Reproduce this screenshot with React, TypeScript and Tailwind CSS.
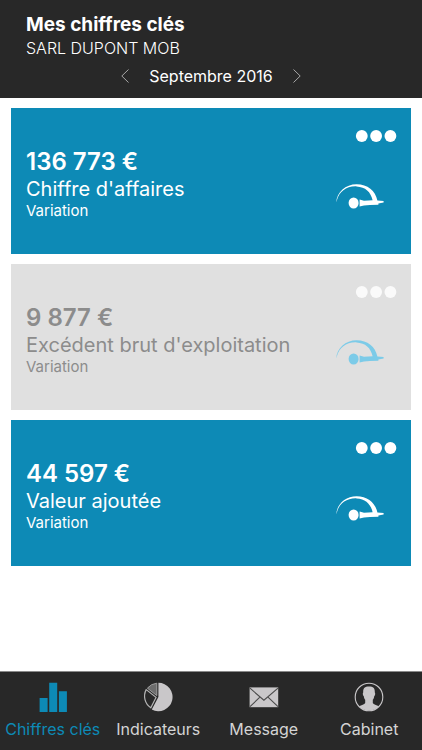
import { clsx } from "clsx";

type KeyFigure = {
  amount: string;
  label: string;
  muted?: boolean;
};

const FIGURES: KeyFigure[] = [
  { amount: "136 773 €", label: "Chiffre d'affaires" },
  { amount: "9 877 €", label: "Excédent brut d'exploitation", muted: true },
  { amount: "44 597 €", label: "Valeur ajoutée" },
];

const TABS = [
  { label: "Chiffres clés", icon: BarsIcon, active: true },
  { label: "Indicateurs", icon: PieIcon },
  { label: "Message", icon: EnvelopeIcon },
  { label: "Cabinet", icon: PersonIcon },
];

function Chevron({ d }: { d: string }) {
  return (
    <svg viewBox="0 0 8 14" className="h-3.5 w-2" fill="none" stroke="currentColor" strokeWidth="0.9">
      <path d={d} />
    </svg>
  );
}

function GaugeIcon({ className }: { className?: string }) {
  return (
    <svg viewBox="0 0 48 26" className={clsx("h-[26px] w-12", className)} fill="currentColor">
      <path d="M0.2 18.6C0.8 8 9.5 0.2 20.6 0.2C31.6 0.2 39.4 6.8 41.4 16.4L47.6 17V18.6L42.4 19.6V20.8L34 21L28 21.4L23.6 22.6V15.6L28 16.8L36.6 16.2C34.8 7.8 29.4 2.9 20.6 2.4C10.4 1.9 3 8.2 1 16Z" />
      <ellipse cx="17.6" cy="19" rx="5" ry="5.6" />
    </svg>
  );
}

function DotsIcon() {
  return (
    <svg viewBox="0 0 42 12" className="h-3 w-[42px]" fill="currentColor">
      <circle cx="6.8" cy="6" r="5.9" />
      <circle cx="21.1" cy="6" r="5.9" />
      <circle cx="35.4" cy="6" r="5.9" />
    </svg>
  );
}

function BarsIcon() {
  return (
    <svg viewBox="0 0 30 30" className="size-[30px]" fill="currentColor">
      <path d="M1.6 16h8v14h-8zM11.2 0.8h8V30h-8zM20.9 9.2h8V30h-8z" />
    </svg>
  );
}

function PieIcon() {
  return (
    <svg viewBox="0 0 30 30" className="size-[30px]">
      <path d="M15.4 15V0.8A14.2 14.2 0 1 1 8.8 27.6Z" fill="#c9c7c9" />
      <path d="M13.8 13.6V1.2A13.6 13.6 0 0 0 4.4 6.2Z" fill="#6d6d6d" stroke="#a5a5a5" strokeWidth="0.9" />
      <path d="M3.2 7.6L13 15.4L7.8 25.8A14 14 0 0 1 3.2 7.6Z" fill="none" stroke="#b5b5b5" strokeWidth="1.2" />
    </svg>
  );
}

function EnvelopeIcon() {
  return (
    <svg viewBox="0 0 30 30" className="size-[30px]">
      <rect x="0.6" y="5.4" width="28.6" height="19.8" fill="#c9c7c9" />
      <path d="M1 6.2L14.9 18.2L29 6.2M1 24.6L10.9 15.2M29 24.6L19 15.2" fill="none" stroke="#4a4a4a" strokeWidth="1.1" />
    </svg>
  );
}

function PersonIcon() {
  return (
    <svg viewBox="0 0 30 30" className="size-[30px]">
      <circle cx="15" cy="15" r="13.8" fill="none" stroke="#c9c7c9" strokeWidth="1.1" />
      <path
        d="M15 4.4C19.6 4.4 21 6.2 20.8 10.4C21.5 11 21.2 13.6 20.2 14.2C20 16 19.4 17 18.8 17.8V21C19.6 22.4 22.4 23 25 24.2A13.8 13.8 0 0 1 5 24.2C7.6 23 10.4 22.4 11.2 21V17.8C10.6 17 10 16 9.8 14.2C8.8 13.6 8.5 11 9.2 10.4C9 6.2 10.4 4.4 15 4.4Z"
        fill="#c9c7c9"
      />
    </svg>
  );
}

function FigureCard({ figure }: { figure: KeyFigure }) {
  return (
    <article
      className={clsx(
        "flex h-[146px] justify-between pr-[14px] pl-[15px]",
        figure.muted ? "bg-[#e0e0e0] text-[#8c8c8c]" : "bg-[#0d8ab6] text-white",
      )}
    >
      <div className="pt-[39px]">
        <p className="text-2xl leading-[30px] font-semibold">{figure.amount}</p>
        <h2 className="text-xl leading-6">{figure.label}</h2>
        <p className="text-[15px] leading-5">Variation</p>
      </div>
      <div className="flex flex-col items-end justify-between pt-[22px] pb-[44px]">
        <button type="button" aria-label="Options" className={figure.muted ? "text-[#fafafa]" : "text-white"}>
          <DotsIcon />
        </button>
        <GaugeIcon className={clsx("mr-[13px]", figure.muted && "text-[#7ccbe8]")} />
      </div>
    </article>
  );
}

export default function App() {
  return (
    <div className="flex min-h-screen flex-col bg-white font-[Inter,sans-serif]">
      <header className="bg-[#282828] pt-3 pb-[11px] text-white">
        <div className="px-[26px]">
          <h1 className="text-[19px] leading-[26px] font-bold">Mes chiffres clés</h1>
          <p className="text-base leading-5 font-light">SARL DUPONT MOB</p>
        </div>
        <div className="mt-[7px] flex items-center justify-center gap-5 text-base leading-[22px]">
          <button type="button" aria-label="Mois précédent" className="text-[#b5b5b5]">
            <Chevron d="M7.5 0.5L0.8 7L7.5 13.5" />
          </button>
          <span>Septembre 2016</span>
          <button type="button" aria-label="Mois suivant" className="text-[#b5b5b5]">
            <Chevron d="M0.5 0.5L7.2 7L0.5 13.5" />
          </button>
        </div>
      </header>

      <main className="flex flex-1 flex-col gap-[10px] px-[11px] py-[10px]">
        {FIGURES.map((figure) => (
          <FigureCard key={figure.label} figure={figure} />
        ))}
      </main>

      <nav className="grid grid-cols-4 border-t border-[#8a8a8a] bg-[#282828] py-[10px]">
        {TABS.map(({ label, icon: Icon, active }) => (
          <a
            key={label}
            href="#"
            aria-current={active ? "page" : undefined}
            className={clsx(
              "flex flex-col items-center gap-[6px] text-base leading-[22px] whitespace-nowrap",
              active ? "text-[#0d8ab6]" : "text-[#d4d4d4]",
            )}
          >
            <Icon />
            {label}
          </a>
        ))}
      </nav>
    </div>
  );
}
